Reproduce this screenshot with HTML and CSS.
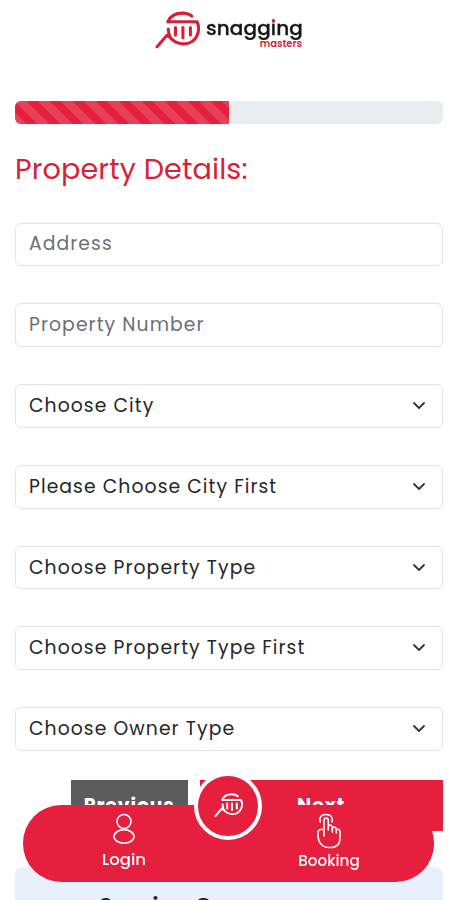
FILE: index.html
```html
<!DOCTYPE html>
<html lang="en">
<head>
<meta charset="utf-8">
<meta name="viewport" content="width=device-width, initial-scale=1">
<title>Snagging Masters</title>
<link rel="stylesheet" href="styles.css">
</head>
<body>
<svg class="defs" width="0" height="0" aria-hidden="true">
  <symbol id="magnifier" viewBox="0 0 44 38">
    <path d="M12.500 10.500C15 4.500 21 2 27 2C31 2 34 3 36 5M12.500 10.500H41C44.500 17 42 26 36 30C29 34 20 32 14.500 25.500L11.500 24L2 35M13 17.500Q13 22.500 15 26"/>
    <path class="bars" d="M20 16V23.500M27.300 16V26M34.600 16V23.500"/>
  </symbol>
</svg>
<div class="page">
  <header class="logo">
    <svg class="logo-mark" viewBox="0 0 44 38"><use href="#magnifier"/></svg>
    <div class="logo-words">
      <span class="logo-name">snagging</span>
      <span class="logo-sub">masters</span>
    </div>
  </header>
  <div class="progress"><div class="progress-bar"></div></div>
  <h1>Property Details:</h1>
  <form class="fields">
    <input class="field" placeholder="Address">
    <input class="field" placeholder="Property Number">
    <div class="field select"><span>Choose City</span><svg class="chevron" viewBox="0 0 14 9"><path d="M2 2l5 5 5-5"/></svg></div>
    <div class="field select"><span>Please Choose City First</span><svg class="chevron" viewBox="0 0 14 9"><path d="M2 2l5 5 5-5"/></svg></div>
    <div class="field select"><span>Choose Property Type</span><svg class="chevron" viewBox="0 0 14 9"><path d="M2 2l5 5 5-5"/></svg></div>
    <div class="field select"><span>Choose Property Type First</span><svg class="chevron" viewBox="0 0 14 9"><path d="M2 2l5 5 5-5"/></svg></div>
    <div class="field select"><span>Choose Owner Type</span><svg class="chevron" viewBox="0 0 14 9"><path d="M2 2l5 5 5-5"/></svg></div>
  </form>
  <div class="actions">
    <button class="previous">Previous</button>
    <button class="next">Next</button>
  </div>
  <section class="service">Service C</section>
</div>
<nav class="tabbar">
  <a class="tab login">
    <svg width="24" height="32" viewBox="0 0 24 32"><circle cx="12" cy="8.500" r="7"/><ellipse cx="12" cy="23.500" rx="10" ry="6.700"/></svg>
    <span>Login</span>
  </a>
  <a class="tab booking">
    <svg width="26" height="36" viewBox="0 0 26 36"><path d="M8 23V7.500Q8 5 10 5Q12.300 5 12.300 7.500V17M12.300 12.500Q16.300 11 16.300 15V19M16.300 14.500Q20.300 13 20.300 17V20M20.300 16.500Q24 15.500 24 19V25Q24 34.500 14 34.500H12.500Q6 34.500 3 28Q1.500 24 2 18.500Q4 15 8 17M4.200 9Q2.500 1.500 10 1.500Q17.500 1.500 16 9"/></svg>
    <span>Booking</span>
  </a>
  <a class="home"><svg viewBox="0 0 44 38"><use href="#magnifier"/></svg></a>
</nav>
</body>
</html>
```
FILE: styles.css
```css
* { box-sizing: border-box; }
body {
  margin: 0;
  height: 900px;
  overflow: hidden;
  background: #fff;
  color: #212529;
  font-family: Poppins, Inter, sans-serif;
}
.defs { display: block; }
.page { height: 900px; padding: 0 9px 0 15px; overflow: hidden; }
.logo-mark, .home svg { fill: none; stroke: currentColor; stroke-width: 3; stroke-linecap: round; }
.logo {
  display: flex;
  height: 101px;
  padding: 11px 0 0 140px;
  color: #d91f38;
}
.logo-mark { width: 45px; height: 39px; flex: none; }
.logo-words { display: flex; flex-direction: column; width: 103px; padding: 5px 0 0 6px; }
.logo-name {
  align-self: flex-start;
  font-size: 20px;
  font-weight: 500;
  line-height: 24px;
  letter-spacing: .1px;
  color: transparent;
  -webkit-text-stroke: .3px transparent;
  background: linear-gradient(#d91f38, #d91f38) 66px 0 / 8px 8px no-repeat, #151515;
  -webkit-background-clip: text;
  background-clip: text;
}
.logo-sub { align-self: flex-end; margin: -1px 1px 0 0; font-size: 10px; font-weight: 600; line-height: 10px; }
.progress { height: 23px; border-radius: 6px; background: #e9ecef; overflow: hidden; }
.progress-bar {
  width: 50%;
  height: 100%;
  background: #e51f3d linear-gradient(45deg, rgba(255,255,255,.15) 25%, transparent 25%, transparent 50%, rgba(255,255,255,.15) 50%, rgba(255,255,255,.15) 75%, transparent 75%) 0 0 / 23px 23px;
}
h1 {
  margin: 25px 0 33.500px;
  color: #d91f38;
  font-size: 28.700px;
  font-weight: 400;
  line-height: 40px;
  letter-spacing: .1px;
  white-space: nowrap;
}
.fields { display: flex; flex-direction: column; gap: 37px; }
.field {
  display: flex;
  align-items: center;
  width: 100%;
  height: 43.800px;
  padding: 0 16px 1px 13px;
  border: 1px solid #e1e4e6;
  border-radius: 6px;
  background: #fff;
  color: #24272a;
  font: 400 18.800px Poppins, Inter, sans-serif;
  letter-spacing: 1.070px;
  white-space: nowrap;
  outline: none;
}
.field::placeholder { color: #6c7075; opacity: 1; }
.select { justify-content: space-between; }
.chevron { width: 14px; height: 9px; fill: none; stroke: #30343a; stroke-width: 1.800; stroke-linecap: round; stroke-linejoin: round; }
.actions { display: flex; gap: 12px; margin: 29px 0 0 56px; }
.actions button {
  height: 51px;
  padding: 0;
  border: 0;
  color: #fff;
  font: 700 18.800px Poppins, Inter, sans-serif;
}
.actions .previous { width: 116.500px; background: #5c5c5c; letter-spacing: .9px; }
.actions .next { flex: 1; background: #e51f3d; letter-spacing: 1px; }
.service {
  height: 80px;
  margin-top: 36px;
  padding: 21px 0 0 84px;
  border-radius: 8px 8px 0 0;
  background: #e8f0fb;
  font-size: 22.500px;
  font-weight: 600;
  line-height: 36px;
  letter-spacing: .8px;
}
.tabbar {
  position: fixed;
  left: 23px;
  top: 805px;
  display: flex;
  justify-content: space-between;
  width: 411px;
  height: 76.500px;
  padding: 8px 71px 0 67px;
  border-radius: 38px;
  background: #e51f3d;
  color: #fff;
}
.tab { display: flex; flex-direction: column; align-items: center; width: 68px; font-size: 16.500px; font-weight: 500; line-height: 20px; }
.tab svg { fill: none; stroke: #fff; stroke-width: 1.600; stroke-linecap: round; stroke-linejoin: round; }
.login span { margin-top: 5px; }
.booking span { margin-top: 2px; font-size: 15.200px; }
.home {
  position: absolute;
  left: 171px;
  top: -33px;
  display: flex;
  align-items: center;
  justify-content: center;
  width: 68px;
  height: 68px;
  border: 4px solid #fff;
  border-radius: 50%;
  background: #e51f3d;
}
.home svg { width: 29px; height: 25px; margin-top: -2px; }
```
